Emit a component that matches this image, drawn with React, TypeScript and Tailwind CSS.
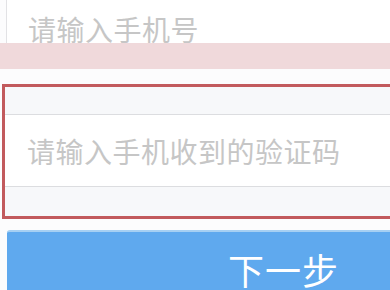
export default function App() {
  return (
    <div className="w-[390px] h-[290px] overflow-hidden bg-[#fcfcfd] font-['Noto_Sans_CJK_SC','Noto_Sans',sans-serif]">
      <div className="w-[600px]">
        {/* phone number field, cut by the highlight band */}
        <div className="h-[43px] ml-[6px] overflow-hidden border-l border-[#e2e2e5] bg-white pl-[21px] pt-[11px] text-[28px] leading-[36px] tracking-[0.5px] text-[#c6c6c6]">
          请输入手机号
        </div>
        <div className="h-[26px] bg-[#f0d9db]" />
        <div className="h-[15px]" />

        {/* verification code field, outlined in red */}
        <div className="ml-[2px] border-[3px] border-[#c25a5d] bg-[#f7f8fa]">
          <div className="h-[27px]" />
          <div className="flex h-[73px] items-center border-y border-[#dcdde0] bg-white pl-[22px] text-[28px] leading-none tracking-[0.5px] text-[#c6c6c6]">
            请输入手机收到的验证码
          </div>
          <div className="h-[29px]" />
        </div>

        <div className="h-[11px]" />

        {/* next step button */}
        <div className="ml-[7px] flex h-[72px] w-[553px] justify-center rounded-[3px] border-t-2 border-[#a6d0f3] bg-[#5fa9ee] pt-[19px] text-[36px] leading-none tracking-[1px] text-white">
          下一步
        </div>
      </div>
    </div>
  )
}
